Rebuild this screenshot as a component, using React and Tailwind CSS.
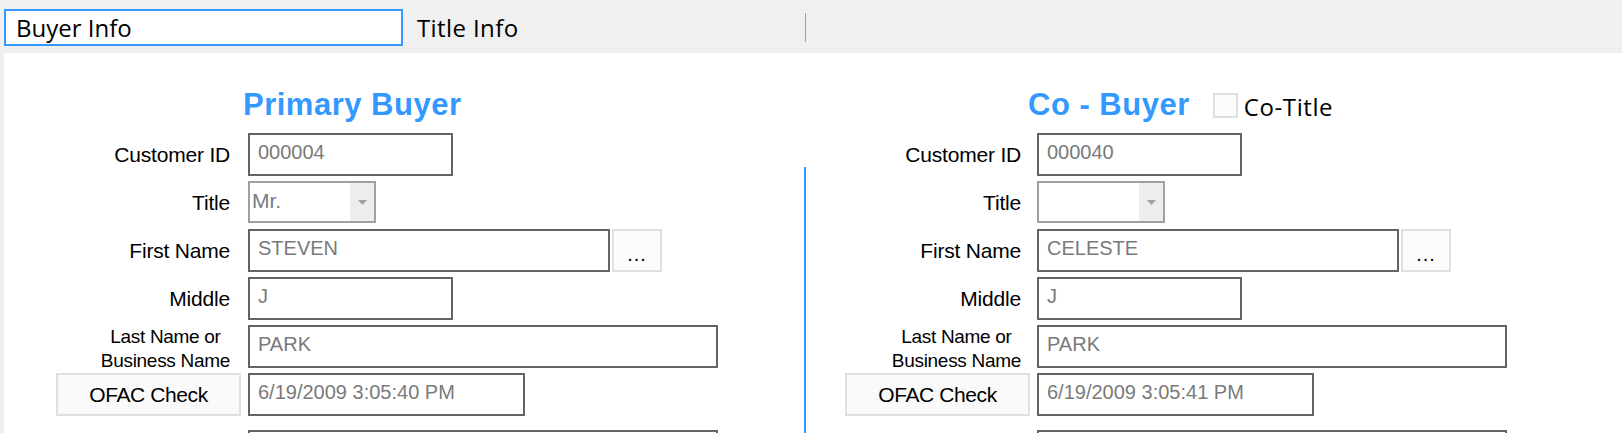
import React from 'react'

const sans = "font-['Liberation_Sans',Arial,sans-serif]"
const ui = "font-['Open_Sans','Noto_Sans',sans-serif]"

const panels = {
  left: {
    labelBox: 'w-[226px] mr-[18px]',
    ofac: 'ml-[52px] mr-[7px]',
    heading: 'ml-[239px]',
  },
  right: {
    labelBox: 'w-[215px] mr-[16px]',
    ofac: 'ml-[39px] mr-[7px]',
    heading: 'ml-[222px]',
  },
}

function TextBox({ width, value }) {
  return (
    <div className={`${width} h-[43px] border-2 border-[#646464] bg-white flex items-center pl-[8px] pb-[5px] text-[20px] text-[#7a7a7a] whitespace-nowrap`}>
      {value}
    </div>
  )
}

function Label({ box, children }) {
  return (
    <div className={`${box} shrink-0 flex justify-end items-center text-[21px] tracking-[-0.2px] text-black`}>
      {children}
    </div>
  )
}

function TitleSelect({ value }) {
  return (
    <div className="w-[128px] h-[42px] self-start border-2 border-[#a0a0a0] bg-white flex">
      <div className="flex-1 flex items-center pl-[2px] pb-[3px] text-[21px] text-[#7a7a88]">{value}</div>
      <div className="w-[24px] bg-[#ededed] flex items-center justify-center">
        <svg width="9" height="5" viewBox="0 0 9 5">
          <path d="M0 0h9L4.5 5z" fill="#a0a0a0" />
        </svg>
      </div>
    </div>
  )
}

function BuyerPanel({ side, title, data, extra }) {
  const p = panels[side]
  return (
    <div className={`${sans} flex flex-col`}>
      <div className="mt-[36px] h-[31px] flex items-start">
        <h2 className={`${p.heading} text-[31px] leading-[31px] font-bold tracking-[0.5px] text-[#3399ff] whitespace-nowrap`}>{title}</h2>
        {extra}
      </div>

      <div className="mt-[13px] flex flex-col gap-[5px]">
        <div className="h-[43px] flex items-center">
          <Label box={p.labelBox}>Customer ID</Label>
          <TextBox width="w-[205px]" value={data.id} />
        </div>
        <div className="h-[43px] flex items-center">
          <Label box={p.labelBox}>Title</Label>
          <TitleSelect value={data.title} />
        </div>
        <div className="h-[43px] flex items-center">
          <Label box={p.labelBox}>First Name</Label>
          <TextBox width="w-[362px]" value={data.first} />
          <button className="ml-[2px] w-[50px] h-[43px] pt-[7px] border-2 border-[#e0e0e0] bg-[#fcfcfc] text-[20px] tracking-[1px] text-black">...</button>
        </div>
        <div className="h-[43px] flex items-center">
          <Label box={p.labelBox}>Middle</Label>
          <TextBox width="w-[205px]" value={data.middle} />
        </div>
        <div className="h-[43px] flex items-center">
          <div className={`${p.labelBox} shrink-0 flex justify-end mt-[5px]`}>
            <span className="text-center text-[19px] leading-[24px] tracking-[-0.3px] text-black">
              Last Name or<br />Business Name
            </span>
          </div>
          <TextBox width="w-[470px]" value={data.last} />
        </div>
        <div className="h-[43px] flex items-center">
          <button className={`${p.ofac} w-[185px] h-[43px] shrink-0 border-2 border-[#e0e0e0] bg-[#fafafa] text-[21px] tracking-[-0.4px] text-black`}>
            OFAC Check
          </button>
          <TextBox width="w-[277px]" value={data.ofac} />
        </div>
        <div className="mt-[9px] h-[43px] flex items-center">
          <div className={`${p.labelBox} shrink-0`} />
          <TextBox width="w-[470px]" value="" />
        </div>
      </div>
    </div>
  )
}

export default function App() {
  return (
    <div className="w-full h-[433px] overflow-hidden bg-[#f0f0f0] flex flex-col">
      <div className={`${ui} h-[53px] shrink-0 flex items-start pt-[9px] pl-[4px]`}>
        <div className="w-[399px] h-[37px] border-2 border-[#3399ff] bg-white flex items-center pl-[10px] text-[24px] text-black">
          Buyer Info
        </div>
        <div className="w-[402px] h-[37px] flex items-center pl-[14px] text-[24px] tracking-[0.4px] text-black">
          Title Info
        </div>
        <div className="w-px h-[29px] mt-[4px] bg-[#a0a0a0]" />
      </div>

      <div className="flex-1 ml-[4px] bg-white flex">
        <div className="w-[800px] shrink-0">
          <BuyerPanel
            side="left"
            title="Primary Buyer"
            data={{ id: '000004', title: 'Mr.', first: 'STEVEN', middle: 'J', last: 'PARK', ofac: '6/19/2009 3:05:40 PM' }}
          />
        </div>
        <div className="w-[2px] mt-[114px] bg-[#3399ff] shrink-0" />
        <div className="flex-1">
          <BuyerPanel
            side="right"
            title="Co - Buyer"
            data={{ id: '000040', title: '', first: 'CELESTE', middle: 'J', last: 'PARK', ofac: '6/19/2009 3:05:41 PM' }}
            extra={
              <div className="flex items-start">
                <div className="ml-[23px] mt-[4px] w-[25px] h-[25px] border-2 border-[#e0e0e0] bg-[#fcfcfc]" />
                <span className={`${ui} ml-[6px] mt-[2px] text-[24px] leading-[32px] tracking-[0.6px] text-black`}>Co-Title</span>
              </div>
            }
          />
        </div>
      </div>
    </div>
  )
}
